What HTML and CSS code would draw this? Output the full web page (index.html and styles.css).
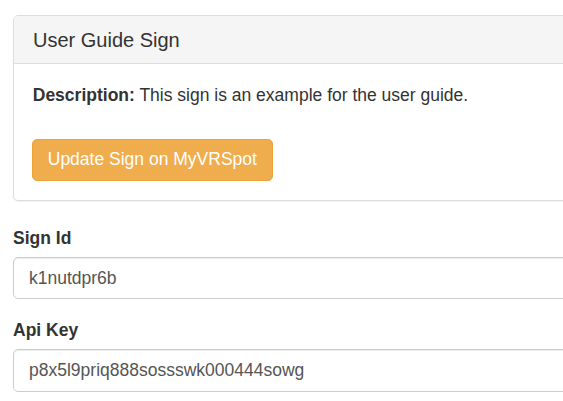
FILE: index.html
```html
<!DOCTYPE html>
<html lang="en">
<head>
  <meta charset="UTF-8" />
  <meta name="viewport" content="width=device-width, initial-scale=1.0"/>
  <title>User Guide Sign</title>
  <link rel="stylesheet" href="styles.css">
</head>
<body>
  <div class="page">
    <!-- Sign summary -->
    <div class="panel">
      <div class="panel-heading">User Guide Sign</div>
      <div class="panel-body">
        <p class="description"><strong>Description:</strong> This sign is an example for the user guide.</p>
        <button type="button" class="btn-warning">Update Sign on MyVRSpot</button>
      </div>
    </div>

    <!-- Sign settings -->
    <form class="sign-form">
      <div class="form-group">
        <label for="signId">Sign Id</label>
        <input type="text" id="signId" value="k1nutdpr6b" />
      </div>
      <div class="form-group">
        <label for="apiKey">Api Key</label>
        <input type="text" id="apiKey" value="p8x5l9priq888sossswk000444sowg" />
      </div>
    </form>
  </div>
</body>
</html>
```

FILE: styles.css
```css
html, body { overflow: hidden; }
body {
  margin: 0;
  padding: 15px 13px;
  font-family: "Liberation Sans", Arial, sans-serif;
  font-size: 17.5px;
  line-height: 25px;
  color: #333;
  background: #fff;
}
.page { width: 640px; }

.panel {
  border: 1px solid #ddd;
  border-radius: 5px;
  box-shadow: 0 1px 1px rgba(0, 0, 0, 0.05);
  margin-bottom: 25px;
}
.panel-heading {
  background: #f5f5f5;
  border-bottom: 1px solid #ddd;
  border-radius: 4px 4px 0 0;
  padding: 12.5px 19px;
  font-size: 20px;
  line-height: 22px;
}
.panel-body { padding: 18.75px; }
.description { margin: 0 0 31px; }
.btn-warning {
  font-family: inherit;
  font-size: 17.5px;
  line-height: 25px;
  padding: 7.5px 15px;
  margin-left: -1px;
  color: #fff;
  background: #f0ad4e;
  border: 1px solid #eea236;
  border-radius: 5px;
  cursor: pointer;
}
.btn-warning:hover { background: #ec971f; }

.form-group { margin-bottom: 18.75px; }
label {
  display: block;
  font-weight: bold;
  margin-bottom: 6.25px;
}
input[type="text"] {
  display: block;
  width: 100%;
  height: 42.5px;
  padding: 7.5px 15px;
  font-family: inherit;
  font-size: 17.5px;
  color: #555;
  border: 1px solid #ccc;
  border-radius: 5px;
  box-sizing: border-box;
  box-shadow: inset 0 1px 1px rgba(0, 0, 0, 0.075);
}
```
